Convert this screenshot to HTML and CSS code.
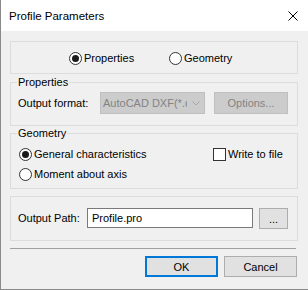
FILE: index.html
```html
<!DOCTYPE html>
<html lang="en">

<head>
    <meta charset="UTF-8">
    <title>Profile Parameters</title>
    <link rel="stylesheet" href="styles.css">
</head>

<body>

    <div class="window">
        <!-- Title bar -->
        <div class="titlebar">
            <span class="title">Profile Parameters</span>
            <svg class="close" width="10" height="10" viewBox="0 0 10 10">
                <path d="M0.5 0.5 L9.5 9.5 M9.5 0.5 L0.5 9.5" stroke="#000" stroke-width="1" fill="none" />
            </svg>
        </div>

        <div class="client">
            <!-- Mode switch -->
            <div class="group mode">
                <div class="option"><span class="radio on"></span><span>Properties</span></div>
                <div class="option"><span class="radio"></span><span>Geometry</span></div>
            </div>

            <fieldset class="group props">
                <legend>Properties</legend>
                <div class="row">
                    <span class="label">Output format:</span>
                    <div class="combo">
                        <span class="value">AutoCAD DXF(*.dxf)</span>
                        <svg class="chevron" width="8" height="5" viewBox="0 0 8 5">
                            <path d="M0.5 0.5 L4 4 L7.5 0.5" stroke="#a6a6a6" stroke-width="1" fill="none" />
                        </svg>
                    </div>
                    <div class="btn disabled options-btn">Options...</div>
                </div>
            </fieldset>

            <fieldset class="group geom">
                <legend>Geometry</legend>
                <div class="options">
                    <div class="option"><span class="radio on"></span><span>General characteristics</span></div>
                    <div class="option"><span class="check"></span><span>Write to file</span></div>
                    <div class="option"><span class="radio"></span><span>Moment about axis</span></div>
                </div>
            </fieldset>

            <div class="group path">
                <span class="label">Output Path:</span>
                <div class="field">Profile.pro</div>
                <div class="btn browse">...</div>
            </div>

            <div class="separator"></div>

            <div class="buttons">
                <div class="btn ok">OK</div>
                <div class="btn">Cancel</div>
            </div>
        </div>
    </div>

</body>

</html>
```

FILE: styles.css
```css
* {
    margin: 0;
    padding: 0;
    box-sizing: border-box;
}

body {
    font-family: "Liberation Sans", Arial, sans-serif;
    font-size: 11px;
    color: #000;
    background-color: #f0f0f0;
}

.window {
    width: 308px;
    height: 290px;
    display: flex;
    flex-direction: column;
    background-color: #f0f0f0;
    border-left: 1px solid #8a8a8a;
    border-bottom: 1px solid #8a8a8a;
}

.titlebar {
    flex: none;
    height: 31px;
    background-color: #fff;
    display: flex;
    align-items: center;
    justify-content: space-between;
    padding: 0 10px 0 8px;
    font-size: 11.5px;
}

.close {
    display: block;
    margin-top: 1px;
}

.client {
    flex: 1;
    padding: 10px 10px 0 9px;
}

.group {
    border: 1px solid #dcdcdc;
}

fieldset.group {
    min-width: 0;
    padding: 3px 0 11px 7px;
    margin-top: 2px;
}

legend {
    height: 13px;
    line-height: 13px;
    padding: 0 1px;
    margin-left: -1px;
}

/* radios and checkbox */
.option {
    display: flex;
    align-items: center;
    gap: 2px;
    height: 13px;
    line-height: 13px;
    white-space: nowrap;
}

.radio {
    flex: none;
    width: 13px;
    height: 13px;
    border: 1px solid #333;
    border-radius: 50%;
    background-color: #fff;
}

.radio.on::after {
    content: "";
    display: block;
    width: 7px;
    height: 7px;
    margin: 2px;
    border-radius: 50%;
    background-color: #1a1a1a;
}

.check {
    flex: none;
    width: 13px;
    height: 13px;
    border: 1px solid #333;
    background-color: #fff;
}

.mode {
    height: 33px;
    display: flex;
    padding: 10px 0 0 58px;
}

.mode .option {
    width: 100px;
}

/* Properties group */
.row {
    display: flex;
    align-items: center;
    height: 22px;
}

.props .label {
    width: 82px;
}

.combo {
    width: 105px;
    height: 22px;
    display: flex;
    align-items: center;
    padding-left: 2px;
    background-color: #ccc;
    border: 1px solid #bfbfbf;
    color: #838383;
}

.combo .value {
    width: 84px;
    overflow: hidden;
    white-space: nowrap;
}

.chevron {
    display: block;
    margin-left: 5px;
}

.btn {
    height: 21px;
    display: flex;
    align-items: center;
    justify-content: center;
    background-color: #e1e1e1;
    border: 1px solid #adadad;
}

.btn.disabled {
    background-color: #ccc;
    border-color: #bfbfbf;
    color: #838383;
}

.options-btn {
    width: 74px;
    height: 22px;
    margin-left: 9px;
}

/* Geometry group */
fieldset.geom {
    margin-top: 1px;
    padding-top: 8px;
    padding-bottom: 7px;
}

.options {
    display: grid;
    grid-template-columns: 194px auto;
    row-gap: 7px;
    padding-left: 1px;
}

/* Output path */
.path {
    display: flex;
    align-items: flex-start;
    margin-top: 7px;
    padding: 11px 0 11px 7px;
}

.path .label {
    width: 69px;
    line-height: 20px;
}

.field {
    width: 166px;
    height: 20px;
    line-height: 18px;
    padding-left: 4px;
    background-color: #fff;
    border: 1px solid #7a7a7a;
}

.browse {
    width: 29px;
    margin-left: 6px;
}

.separator {
    margin: 7px 2px 0 0;
    border-top: 1px solid #a0a0a0;
}

.buttons {
    display: flex;
    justify-content: flex-end;
    gap: 6px;
    margin-top: 7px;
    padding-right: 1px;
}

.buttons .btn {
    width: 73px;
}

.btn.ok {
    border: 2px solid #0078d7;
}
```
